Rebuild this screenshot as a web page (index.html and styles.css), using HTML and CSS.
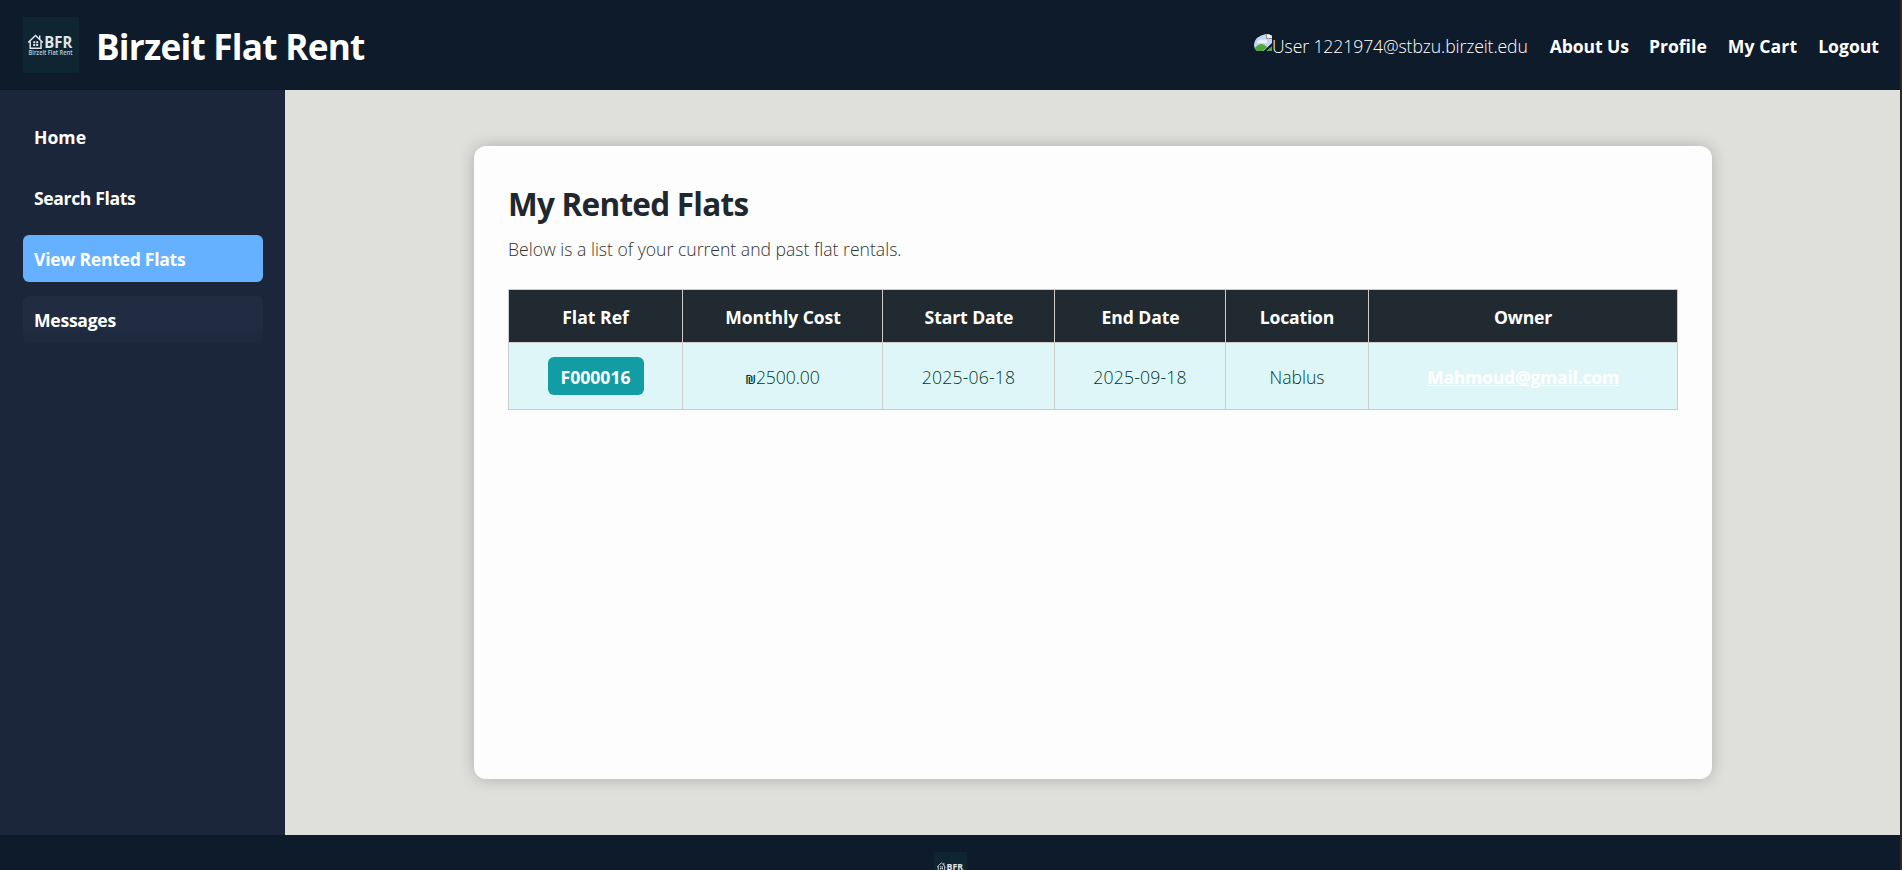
FILE: index.html
```
<!DOCTYPE html>
<html lang="en">
<head>
<meta charset="utf-8">
<title>Birzeit Flat Rent</title>
<link rel="stylesheet" href="styles.css">
</head>
<body>
<svg class="defs" aria-hidden="true">
  <symbol id="logo" viewBox="0 0 56 56">
    <rect width="56" height="56" fill="#102532"/>
    <path d="M5.200 25.500 12.500 18.500l7.300 7M7.200 24.500v6.800h10.800v-6.800M16.700 22.300v-3.800" fill="none" stroke="#dfe5e8" stroke-width="1.500"/>
    <path d="M10.300 24.200h2v2h-2zM13.200 24.200h2v2h-2zM10.300 27.100h2v2h-2zM13.200 27.100h2v2h-2z" fill="#dfe5e8"/>
    <text class="logo-name" x="21.300" y="31" textLength="28" lengthAdjust="spacingAndGlyphs">BFR</text>
    <text class="logo-sub" x="5.500" y="38" textLength="44" lengthAdjust="spacingAndGlyphs">Birzeit Flat Rent</text>
  </symbol>
</svg>
<div class="page">
  <header class="header">
    <div class="brand">
      <svg class="logo"><use href="#logo"/></svg>
      <h1 class="brand-name">Birzeit Flat Rent</h1>
    </div>
    <nav class="top-nav">
      <span class="user">
        <svg class="broken" viewBox="0 0 18 18">
          <defs><clipPath id="round"><path d="M12 0Q16 0 18 2V9L9.500 17H3Q0 14.500 0 10.500Q1 2 12 0zM18 12.500V17H12.500z"/></clipPath></defs>
          <g clip-path="url(#round)">
            <path d="M0 0h18v18H0z" fill="#c3d5f3"/>
            <path d="M3 8q3-4 6-2 3-2 4 1v2H3z" fill="#e9f1fb"/>
            <path d="M0 15q7-9 13-2l-5 5H0zM11 18l7-6v6z" fill="#4fa83c"/>
            <path d="M12.500 0v4.500h5.500V0z" fill="#f0f0f0"/>
            <path d="M12.500 0v4.500h5.500" fill="none" stroke="#8f8f8f"/>
          </g>
        </svg><span class="user-name">User 1221974@stbzu.birzeit.edu</span>
      </span>
      <a class="about">About Us</a><a>Profile</a><a class="cart">My Cart</a><a>Logout</a>
    </nav>
  </header>
  <div class="body">
    <aside class="sidebar">
      <a class="home">Home</a>
      <a class="search">Search Flats</a>
      <a class="active">View Rented Flats</a>
      <a class="hover">Messages</a>
    </aside>
    <main class="main">
      <section class="card">
        <h2 class="title">My Rented Flats</h2>
        <p class="lead">Below is a list of your current and past flat rentals.</p>
        <table class="rentals">
          <colgroup><col class="c-ref"><col class="c-cost"><col class="c-start"><col class="c-end"><col class="c-loc"><col class="c-owner"></colgroup>
          <thead><tr><th>Flat Ref</th><th class="shift">Monthly Cost</th><th class="shift">Start Date</th><th class="shift">End Date</th><th class="tight">Location</th><th class="tight">Owner</th></tr></thead>
          <tbody><tr><td><a class="badge">F000016</a></td><td class="cost"><span class="shekel">₪</span>2500.00</td><td class="date">2025-06-18</td><td class="date">2025-09-18</td><td>Nablus</td><td><a class="owner">Mahmoud@gmail.com</a></td></tr></tbody>
        </table>
      </section>
    </main>
  </div>
  <footer class="footer"><svg class="footer-logo"><use href="#logo"/></svg></footer>
</div>
</body>
</html>
```
FILE: styles.css
```
* { box-sizing: border-box; }
body {
  margin: 0;
  font-family: "Open Sans", "Noto Sans", sans-serif;
  font-size: 17.6px;
  background: #2a2a2a;
  overflow: hidden;
}
.defs { display: none; }
.page {
  width: 1900px;
  height: 870px;
  display: flex;
  flex-direction: column;
  overflow: hidden;
}
.header {
  height: 90px;
  flex: none;
  display: flex;
  align-items: center;
  justify-content: space-between;
  padding: 0 21px 0 23px;
  background: #0e1b2a;
  border-bottom: 1px solid #12152b;
  color: #fff;
}
.brand { display: flex; align-items: center; gap: 17px; }
.logo { width: 56px; height: 56px; }
.logo-name { font: 700 15.800px "Open Sans", sans-serif; fill: #dfe5e8; }
.logo-sub { font: 600 6.300px "Open Sans", sans-serif; fill: #c3cdd2; }
.brand-name {
  margin: 0;
  padding-top: 3px;
  font-size: 35.2px;
  font-weight: 700;
  line-height: 48px;
  letter-spacing: -.77px;
}
.top-nav { display: flex; align-items: center; gap: 21px; padding-top: 3px; font-weight: 700; }
.top-nav .about { letter-spacing: -.1px; margin-right: -1px; }
.top-nav .cart { letter-spacing: .1px; }
.user { display: flex; align-items: center; margin-right: 1px; font-weight: 300; }
.user-name { letter-spacing: -.1px; }
.broken { width: 18px; height: 18px; margin-top: -7px; }
.body { height: 745px; flex: none; display: flex; }
.sidebar {
  width: 285px;
  flex: none;
  display: flex;
  flex-direction: column;
  gap: 14px;
  padding: 23px 22px 0 23px;
  background: #1c263a;
  color: #fff;
  font-weight: 700;
  letter-spacing: -.28px;
}
.sidebar a { height: 47px; line-height: 48px; padding: 0 11px; border-radius: 6px; }
.sidebar .home { letter-spacing: 0; }
.sidebar .search { letter-spacing: -.38px; }
.sidebar .active { background: #65b1ff; }
.sidebar .hover { background: linear-gradient(#212c42 68%, #1e293d 82%); }
.main { flex: 1; background: #dfe0db; padding: 56px 188px 56px 189px; }
.card {
  height: 633px;
  padding: 34px;
  background: #fdfdfd;
  border-radius: 12px;
  box-shadow: 0 0 16px rgba(0, 0, 0, .22);
}
.title { margin: 0; font-size: 31.500px; line-height: 48px; letter-spacing: -.75px; color: #1e282e; }
.lead { margin: 7px 0 0; line-height: 28px; font-weight: 300; color: #333; }
.rentals {
  width: 1170px;
  margin-top: 26px;
  table-layout: fixed;
  border-collapse: collapse;
  text-align: center;
}
.c-ref { width: 174px; }
.c-cost { width: 200px; }
.c-start { width: 172px; }
.c-end { width: 171px; }
.c-loc { width: 143px; }
.c-owner { width: 309px; }
.rentals th, .rentals td { padding: 2px 0 0; border: 1px solid #ccc; }
.rentals th { height: 53px; background: #202a30; color: #fff; }
.rentals th.tight { letter-spacing: -.2px; }
.rentals th.shift { padding-left: 1px; letter-spacing: -.1px; }
.rentals td { height: 67px; background: #dff6f8; color: #003a2e; font-weight: 300; }
.rentals td:first-child { padding-top: 0; }
.rentals .cost { letter-spacing: -.1px; }
.rentals .date { letter-spacing: .2px; }
.shekel { font-size: 12.500px; font-weight: 600; }
.badge {
  display: block;
  width: 96px;
  height: 38px;
  line-height: 40px;
  margin: 0 auto;
  border-radius: 6px;
  background: #129da5;
  color: #fff;
  font-weight: 700;
}
.owner { color: #fff; font-weight: 700; letter-spacing: -.26px; text-decoration: underline; }
.footer { flex: 1; background: #0e1b2a; padding-top: 17px; text-align: center; }
.footer-logo { width: 33px; height: 33px; }
```
